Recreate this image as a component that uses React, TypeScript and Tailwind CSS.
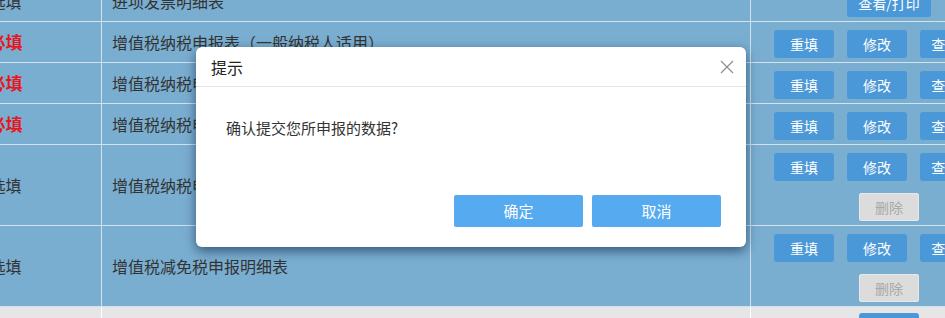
import React from "react";

const FONT = { fontFamily: '"Microsoft YaHei", "Noto Sans CJK SC", "Noto Sans", sans-serif' };

function TBtn({ label, w = "w-[60px]" }: { label: string; w?: string }) {
  return (
    <div className={`${w} h-7 rounded-[3px] bg-[#4a98d8] text-white text-[14px] flex items-center justify-center`}>
      {label}
    </div>
  );
}

function DelBtn() {
  return (
    <div className="w-[60px] h-7 rounded-[2px] bg-[#dcdcdc] border border-[#e8e8e8] text-[#a9a9a9] text-[14px] flex items-center justify-center">
      删除
    </div>
  );
}

type Row = { req: boolean; name: string; kind: "print" | "three" | "four" };

const rows: Row[] = [
  { req: false, name: "进项发票明细表", kind: "print" },
  { req: true, name: "增值税纳税申报表（一般纳税人适用）", kind: "three" },
  { req: true, name: "增值税纳税申报表附列资料（一）", kind: "three" },
  { req: true, name: "增值税纳税申报表附列资料（二）", kind: "three" },
  { req: false, name: "增值税纳税申报表附列资料（三）", kind: "four" },
  { req: false, name: "增值税减免税申报明细表", kind: "four" },
];

export default function App() {
  return (
    <div className="relative w-[945px] h-[318px] overflow-hidden bg-white" style={FONT}>
      <div className="flex flex-col w-[1117px] -ml-[90px] -mt-[19px]">
        {rows.map((r, i) => (
          <div
            key={i}
            className={`flex bg-[#7aaed0] border-b border-[#d3e3ee] ${r.kind === "four" ? "h-[81px]" : "h-[41px]"}`}
          >
            <div className="w-[192px] shrink-0 border-r border-[#d3e3ee] flex items-center justify-center">
              {r.req ? (
                <span className="text-[17px] font-bold text-[#e8161c]">必填</span>
              ) : (
                <span className="text-[16px] text-[#333]">选填</span>
              )}
            </div>
            <div className="w-[649px] shrink-0 border-r border-[#d3e3ee] flex items-center pl-[10px] text-[16px] text-[#333]">
              {r.name}
            </div>
            <div className="w-[276px] shrink-0 flex flex-col items-center pt-2 gap-3">
              {r.kind === "print" ? (
                <TBtn label="查看/打印" w="w-[84px]" />
              ) : (
                <div className="flex gap-[13px]">
                  <TBtn label="重填" />
                  <TBtn label="修改" />
                  <TBtn label="查看/打印" w="w-[84px]" />
                </div>
              )}
              {r.kind === "four" && <DelBtn />}
            </div>
          </div>
        ))}
        <div className="flex h-[40px] bg-[#e6e6e6]">
          <div className="w-[192px] shrink-0 border-r border-white" />
          <div className="w-[649px] shrink-0 border-r border-white" />
          <div className="w-[276px] shrink-0 flex justify-center pt-[6px]">
            <div className="w-[60px] h-7 rounded-[3px] bg-[#4a98d8] text-white text-[14px] flex items-center justify-center">
              提交
            </div>
          </div>
        </div>
      </div>

      <div className="absolute left-[196px] top-[47px] w-[550px] h-[200px] bg-white rounded-[6px] shadow-[0_4px_12px_rgba(0,30,60,0.6)] flex flex-col">
        <div className="h-[40px] border-b border-[#e5e5e5] flex items-center justify-between pl-[15px] pr-[10px]">
          <span className="text-[16px] text-[#222]">提示</span>
          <svg width="16" height="16" viewBox="0 0 16 16" className="mr-[1px]">
            <path d="M2 2 L14 14 M14 2 L2 14" stroke="#8a8a8a" strokeWidth="1.1" fill="none" />
          </svg>
        </div>
        <div className="flex-1 pl-[30px] pt-[31px] text-[15px] text-[#333] leading-[20px]">
          确认提交您所申报的数据?
        </div>
        <div className="flex justify-end gap-[9px] pr-[25px] pb-[20px]">
          <div className="w-[129px] h-[32px] rounded-[2px] bg-[#55aaf0] text-white text-[15px] flex items-center justify-center">
            确定
          </div>
          <div className="w-[129px] h-[32px] rounded-[2px] bg-[#55aaf0] text-white text-[15px] flex items-center justify-center">
            取消
          </div>
        </div>
      </div>
    </div>
  );
}
